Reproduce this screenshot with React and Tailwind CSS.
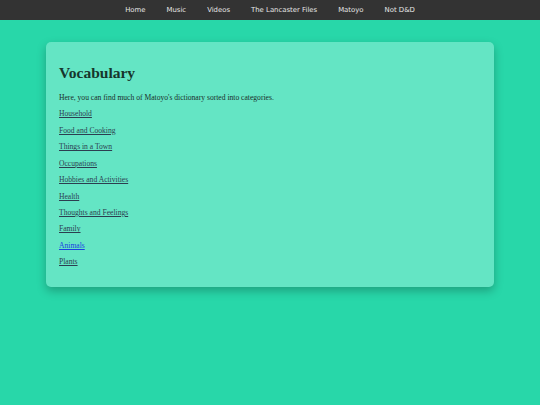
import React from "react";

const nav = ["Home", "Music", "Videos", "The Lancaster Files", "Matoyo", "Not D&D"];
const links = [
  "Household",
  "Food and Cooking",
  "Things in a Town",
  "Occupations",
  "Hobbies and Activities",
  "Health",
  "Thoughts and Feelings",
  "Family",
  "Animals",
  "Plants",
];

export default function App() {
  return (
    <div className="min-h-[405px] w-full bg-[#28d7a9]">
      <nav className="flex h-[20px] items-center justify-center bg-[#333333] pt-[1px] font-['DejaVu_Sans',sans-serif] text-[6.9px] text-[#e6e6e6]">
        {nav.map((n) => (
          <span key={n} className="px-[10.5px]">
            {n}
          </span>
        ))}
      </nav>
      <div className="px-[46px] pt-[22px]">
        <div className="rounded-[5px] bg-[#64e5c4] px-[13px] pb-[21px] pt-[21px] font-['Liberation_Serif',serif] text-[#1a2e2a] shadow-[0_4px_10px_rgba(0,0,0,0.25)]">
          <h1 className="mb-[10.4px] text-[15.5px] font-bold leading-[20px] text-[#16352c]">Vocabulary</h1>
          <p className="text-[7.6px] leading-[9px]">
            Here, you can find much of Matoyo&apos;s dictionary sorted into categories.
          </p>
          <div className="mt-[7px] flex flex-col gap-[7.44px]">
            {links.map((l) => (
              <a
                key={l}
                href="#"
                className={
                  "text-[7.6px] leading-[9px] underline " +
                  (l === "Animals" ? "text-[#1a44e0]" : "text-[#2c3e50]")
                }
              >
                {l}
              </a>
            ))}
          </div>
        </div>
      </div>
    </div>
  );
}
